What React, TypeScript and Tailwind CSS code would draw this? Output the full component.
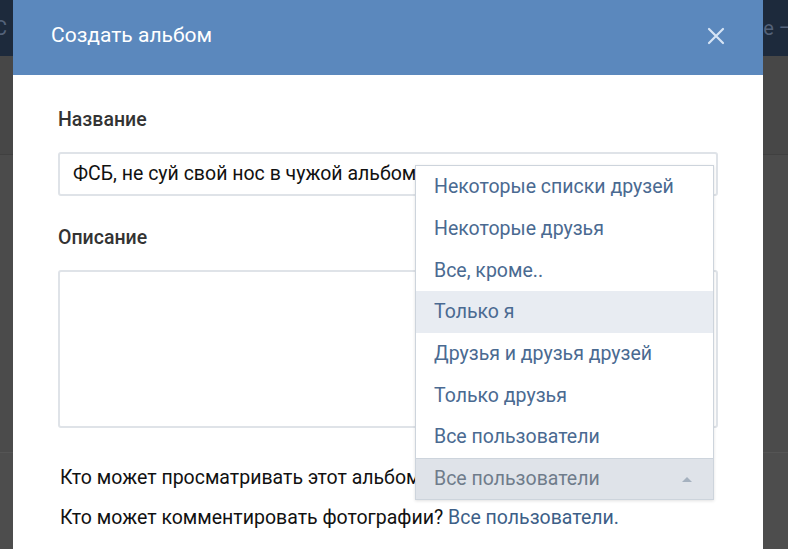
import { useState } from 'react';

const options = [
  'Некоторые списки друзей',
  'Некоторые друзья',
  'Все, кроме..',
  'Только я',
  'Друзья и друзья друзей',
  'Только друзья',
  'Все пользователи',
];

export default function App() {
  const [hovered, setHovered] = useState(3);

  return (
    <div
      className="relative w-[788px] h-[549px] overflow-hidden bg-[#4a4a4a]"
      style={{ fontFamily: 'Roboto, "Noto Sans", sans-serif' }}
    >
      {/* page behind the overlay */}
      <div className="flex flex-col h-full">
        <div className="h-[56px] bg-[#1d2a3c] flex items-center justify-between text-[20px] text-[#53627a]">
          <span className="-ml-[6px]">С</span>
          <span className="mr-[-4px]">е –</span>
        </div>
        <div className="h-[99px] bg-[#474747] border-b border-[#404040]" />
        <div className="flex-1 bg-[#4b4b4b] border-b border-[#555]" />
        <div className="h-[96px] bg-[#4d4d4d]" />
      </div>

      {/* modal */}
      <div className="absolute left-[13px] top-0 w-[750px] h-[549px] bg-white flex flex-col">
        <div className="h-[75px] shrink-0 bg-[#5b88bd] flex items-center justify-between pl-[38px] pr-[38px]">
          <span className="text-white text-[21px] pb-[4px]">Создать альбом</span>
          <svg width="18" height="18" viewBox="0 0 18 18" className="mb-[4px]">
            <path d="M2 2 L16 16 M16 2 L2 16" stroke="#d6e4f5" strokeWidth="2.2" strokeLinecap="round" />
          </svg>
        </div>

        <div className="flex flex-col px-[45px] text-[19.5px] text-[#222]">
          <div className="mt-[33px] h-[24px] leading-[24px] font-medium text-[#333]">Название</div>
          <div className="mt-[20px] h-[44px] border-2 border-[#dfe3e8] rounded-[3px] flex items-center pl-[13px] text-[#111] whitespace-nowrap overflow-hidden">
            ФСБ, не суй свой нос в чужой альбом
          </div>
          <div className="mt-[30px] h-[24px] leading-[24px] font-medium text-[#333]">Описание</div>
          <div className="mt-[20px] h-[158px] border-2 border-[#dfe3e8] rounded-[3px]" />
          <div className="mt-[38px] h-[24px] leading-[24px] pl-[2px] text-[#111] whitespace-nowrap">
            Кто может просматривать этот альбом?
          </div>
          <div className="mt-[16px] h-[24px] leading-[24px] pl-[2px] text-[#111] whitespace-nowrap">
            Кто может комментировать фотографии? <span className="text-[#3d5f88]">Все пользователи.</span>
          </div>
        </div>
      </div>

      {/* dropdown menu */}
      <div className="absolute left-[415px] top-[165px] w-[299px] flex flex-col text-[19.5px] shadow-[0_1px_3px_rgba(0,0,0,0.12)]">
        <div className="bg-white border border-[#cdd4dc] border-b-0 flex flex-col">
          {options.map((o, i) => (
            <div
              key={o}
              onMouseEnter={() => setHovered(i)}
              className={`h-[41.7px] flex items-center pl-[18px] text-[#4a6a91] ${
                i === hovered ? 'bg-[#e8ecf2]' : ''
              }`}
            >
              {o}
            </div>
          ))}
        </div>
        <div className="h-[42px] bg-[#dfe3e9] border border-[#cdd4dc] flex items-center justify-between pl-[18px] pr-[20px] text-[#6f7c8b]">
          <span>Все пользователи</span>
          <svg width="12" height="6" viewBox="0 0 12 6">
            <path d="M1 6 L6 1 L11 6 Z" fill="#a5b1bf" />
          </svg>
        </div>
      </div>
    </div>
  );
}
